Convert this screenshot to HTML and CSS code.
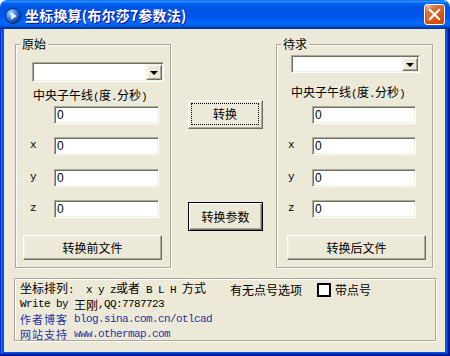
FILE: index.html
```html
<!DOCTYPE html>
<html>
<head>
<meta charset="utf-8">
<link rel="stylesheet" href="styles.css">
</head>
<body>
<div class="window">
  <div class="titlebar">
    <svg class="appicon" width="16" height="16" viewBox="0 0 16 16">
      <defs>
        <radialGradient id="ig" cx="0.35" cy="0.3" r="0.75">
          <stop offset="0" stop-color="#b8dcff"/>
          <stop offset="0.45" stop-color="#3f86e6"/>
          <stop offset="1" stop-color="#0b2a78"/>
        </radialGradient>
      </defs>
      <circle cx="8" cy="8" r="7.5" fill="url(#ig)" stroke="#0a2466" stroke-width="0.8"/>
      <path d="M6 4.3 L11.8 8 L6 11.7 Z" fill="#e6f2ff"/>
    </svg>
    <span class="title">坐标换算(布尔莎7参数法)</span>
    <div class="close">
      <svg width="19" height="19" viewBox="0 0 19 19"><path d="M5 5 L14 14 M14 5 L5 14" stroke="#fff" stroke-width="2.2" stroke-linecap="square"/></svg>
    </div>
  </div>
  <div class="frame">
    <div class="client">
      <div class="top">
        <div class="group gleft">
          <span class="legend">原始</span>
          <div class="combo combo-l"><div class="combo-btn"><span class="tri"></span></div></div>
          <div class="cm cm-l">中央子午线<span class="m">(</span>度<span class="m">.</span>分秒<span class="m">)</span></div>
          <div class="rows rows-l">
            <div class="row"><span class="axis"></span><div class="edit">0</div></div>
            <div class="row"><span class="axis">x</span><div class="edit">0</div></div>
            <div class="row"><span class="axis">y</span><div class="edit">0</div></div>
            <div class="row"><span class="axis">z</span><div class="edit">0</div></div>
          </div>
          <div class="btn filebtn fb-l">转换前文件</div>
        </div>
        <div class="mid">
          <div class="btn focus"><span class="focusrect">转换</span></div>
          <div class="btn default">转换参数</div>
        </div>
        <div class="group gright">
          <span class="legend">待求</span>
          <div class="combo combo-r"><div class="combo-btn"><span class="tri"></span></div></div>
          <div class="cm cm-r">中央子午线<span class="m">(</span>度<span class="m">.</span>分秒<span class="m">)</span></div>
          <div class="rows rows-r">
            <div class="row"><span class="axis"></span><div class="edit">0</div></div>
            <div class="row"><span class="axis">x</span><div class="edit">0</div></div>
            <div class="row"><span class="axis">y</span><div class="edit">0</div></div>
            <div class="row"><span class="axis">z</span><div class="edit">0</div></div>
          </div>
          <div class="btn filebtn fb-r">转换后文件</div>
        </div>
      </div>
      <div class="group gbottom">
        <div class="line l1">
          <span class="l1a">坐标排列<span class="m">:  x y z</span>或者<span class="m"> B L H </span>方式</span>
          <span>有无点号选项</span>
          <span class="check"></span>
          <span class="checklabel">带点号</span>
        </div>
        <div class="line l2"><span class="m">Write by </span>王刚<span class="m">,QQ:7787723</span></div>
        <div class="line l3 blue"><span class="cj">作者博客</span><span class="m"> blog.sina.com.cn/otlcad</span></div>
        <div class="line l4 blue"><span class="cj">网站支持</span><span class="m"> www.othermap.com</span></div>
      </div>
    </div>
  </div>
</div>
</body>
</html>
```

FILE: styles.css
```css
html, body {
  margin: 0;
  padding: 0;
}
body {
  width: 450px;
  height: 356px;
  overflow: hidden;
  background: #ffffff;
  font-family: "Noto Sans CJK SC", "Liberation Sans", sans-serif;
  font-size: 12px;
  color: #000;
}
.window {
  width: 450px;
  height: 356px;
  display: flex;
  flex-direction: column;
}
.titlebar {
  height: 29px;
  flex: none;
  display: flex;
  align-items: center;
  padding: 0 5px 0 5px;
  border-radius: 7px 7px 0 0;
  background: linear-gradient(to bottom, #0058ee 0%, #3a93ff 4%, #288eff 6%, #127dff 8%, #036ffc 10%, #0262ee 14%, #0057e5 20%, #0054e3 24%, #0055eb 56%, #005bf5 66%, #026afe 76%, #0062ef 86%, #0052d6 92%, #0040ab 94%, #003092 100%);
}
.appicon {
  flex: none;
  margin-right: 4px;
  margin-top: 2px;
}
.title {
  flex: 1;
  color: #fff;
  font-weight: bold;
  font-size: 14px;
  letter-spacing: 0.2px;
  line-height: 18px;
  text-shadow: 1px 1px #0f1089;
  white-space: nowrap;
}
.close {
  flex: none;
  width: 21px;
  height: 21px;
  box-sizing: border-box;
  border: 1px solid #fff;
  border-radius: 3px;
  display: flex;
  align-items: center;
  justify-content: center;
  background: radial-gradient(circle at 90% 90%, #cc4600 0%, #dc6527 55%, #cd7546 70%, #ffccb2 90%, #fff 100%);
  box-shadow: inset 0 -1px 2px 1px #da4600;
}
.frame {
  flex: 1;
  display: flex;
  padding: 0 5px 4px 4px;
  background: #0855dd;
  box-shadow: inset -1px -1px #00138c, inset 1px 0 #0831d9, inset -2px -2px #001ea0, inset 2px 0 #166aee, inset -3px -3px #003bda, inset 3px 0 #0855dd;
}
.client {
  flex: 1;
  background: #ece9d8;
  padding: 15px 0 0 10px;
  display: flex;
  flex-direction: column;
}
.top {
  display: flex;
  align-items: flex-start;
  margin-left: 1px;
}
.group {
  position: relative;
  box-sizing: border-box;
  border: 1px solid #aca899;
  box-shadow: inset 1px 1px #fff, 1px 1px #fff;
  display: flex;
  flex-direction: column;
  align-items: flex-start;
}
.legend {
  position: absolute;
  top: -8px;
  left: 4px;
  padding: 0 2px;
  line-height: 14px;
  background: #ece9d8;
}
.gleft {
  width: 156px;
  height: 224px;
}
.gright {
  width: 157px;
  height: 224px;
  margin-left: 13px;
}
.mid {
  width: 75px;
  margin-left: 17px;
  display: flex;
  flex-direction: column;
}
.combo {
  box-sizing: border-box;
  background: #fff;
  border: 1px solid;
  border-color: #aca899 #fff #fff #aca899;
  box-shadow: inset 1px 1px #716f64, inset -1px -1px #f1efe2;
  padding: 1px;
  display: flex;
  justify-content: flex-end;
}
.combo-l {
  width: 132px;
  height: 20px;
  margin: 17px 0 0 16px;
}
.combo-r {
  width: 129px;
  height: 18px;
  margin: 10px 0 0 14px;
}
.combo-btn {
  width: 16px;
  box-sizing: border-box;
  background: #ece9d8;
  border: 1px solid;
  border-color: #f1efe2 #716f64 #716f64 #f1efe2;
  box-shadow: inset 1px 1px #fff, inset -1px -1px #aca899;
  display: flex;
  align-items: center;
  justify-content: center;
}
.tri {
  width: 0;
  height: 0;
  border-left: 4px solid transparent;
  border-right: 4px solid transparent;
  border-top: 4px solid #000;
  margin-top: 1px;
}
.cm {
  line-height: 14px;
  height: 14px;
  white-space: nowrap;
}
.cm-l {
  margin: 6px 0 0 17px;
}
.cm-r {
  margin: 12px 0 0 14px;
}
.m {
  font-family: "Liberation Mono", monospace;
  font-size: 11px;
  letter-spacing: -0.6px;
  white-space: pre;
}
.cj {
  font-size: 11px;
  letter-spacing: 1px;
}
.rows {
  display: flex;
  flex-direction: column;
  gap: 13px;
}
.rows .row:nth-child(3) {
  margin-top: 1px;
}
.rows-l {
  margin: 4px 0 0 14px;
}
.rows-r {
  margin: 7px 0 0 11px;
}
.row {
  display: flex;
  height: 18px;
}
.axis {
  width: 24px;
  font-family: "Liberation Mono", monospace;
  font-size: 11px;
  line-height: 16px;
}
.edit {
  box-sizing: border-box;
  height: 18px;
  background: #fff;
  border: 1px solid;
  border-color: #aca899 #fff #fff #aca899;
  box-shadow: inset 1px 1px #716f64, inset -1px -1px #f1efe2;
  padding-left: 2px;
  font-family: "Liberation Sans", sans-serif;
  font-size: 12px;
  line-height: 16px;
}
.rows-l .edit {
  width: 105px;
}
.rows-r .edit {
  width: 104px;
}
.btn {
  box-sizing: border-box;
  display: flex;
  align-items: center;
  justify-content: center;
  background: #ece9d8;
  border: 1px solid;
  border-color: #fff #716f64 #716f64 #fff;
  box-shadow: inset -1px -1px #aca899, inset 1px 1px #f1efe2;
  font-size: 12px;
  line-height: 14px;
  white-space: nowrap;
}
.filebtn {
  width: 139px;
  height: 25px;
  margin-top: 17px;
}
.fb-l {
  margin-left: 7px;
}
.fb-r {
  margin-left: 10px;
}
.focus {
  height: 29px;
  margin-top: 56px;
  padding: 2px 3px 3px 2px;
  align-items: stretch;
}
.focusrect {
  flex: 1;
  border: 1px dotted #000;
  display: flex;
  align-items: center;
  justify-content: center;
}
.default {
  height: 29px;
  margin-top: 73px;
  border: 1px solid #000;
  box-shadow: inset 1px 1px #fff, inset -1px -1px #716f64, inset -2px -2px #aca899;
}
.gbottom {
  width: 422px;
  height: 63px;
  margin-top: 10px;
  padding: 2px 0 0 5px;
}
.line {
  line-height: 15px;
  height: 15px;
  white-space: nowrap;
  display: flex;
  align-items: center;
}
.l1 {
  height: 16px;
}
.l3 {
  height: 16px;
}
.l4 {
  height: 16px;
}
.l1a {
  width: 210px;
}
.check {
  width: 14px;
  height: 14px;
  box-sizing: border-box;
  border: 2px solid #000;
  background: #fff;
  margin-left: 15px;
  margin-top: 2px;
}
.checklabel {
  margin-left: 4px;
}
.blue {
  color: #1f34a6;
}
```
